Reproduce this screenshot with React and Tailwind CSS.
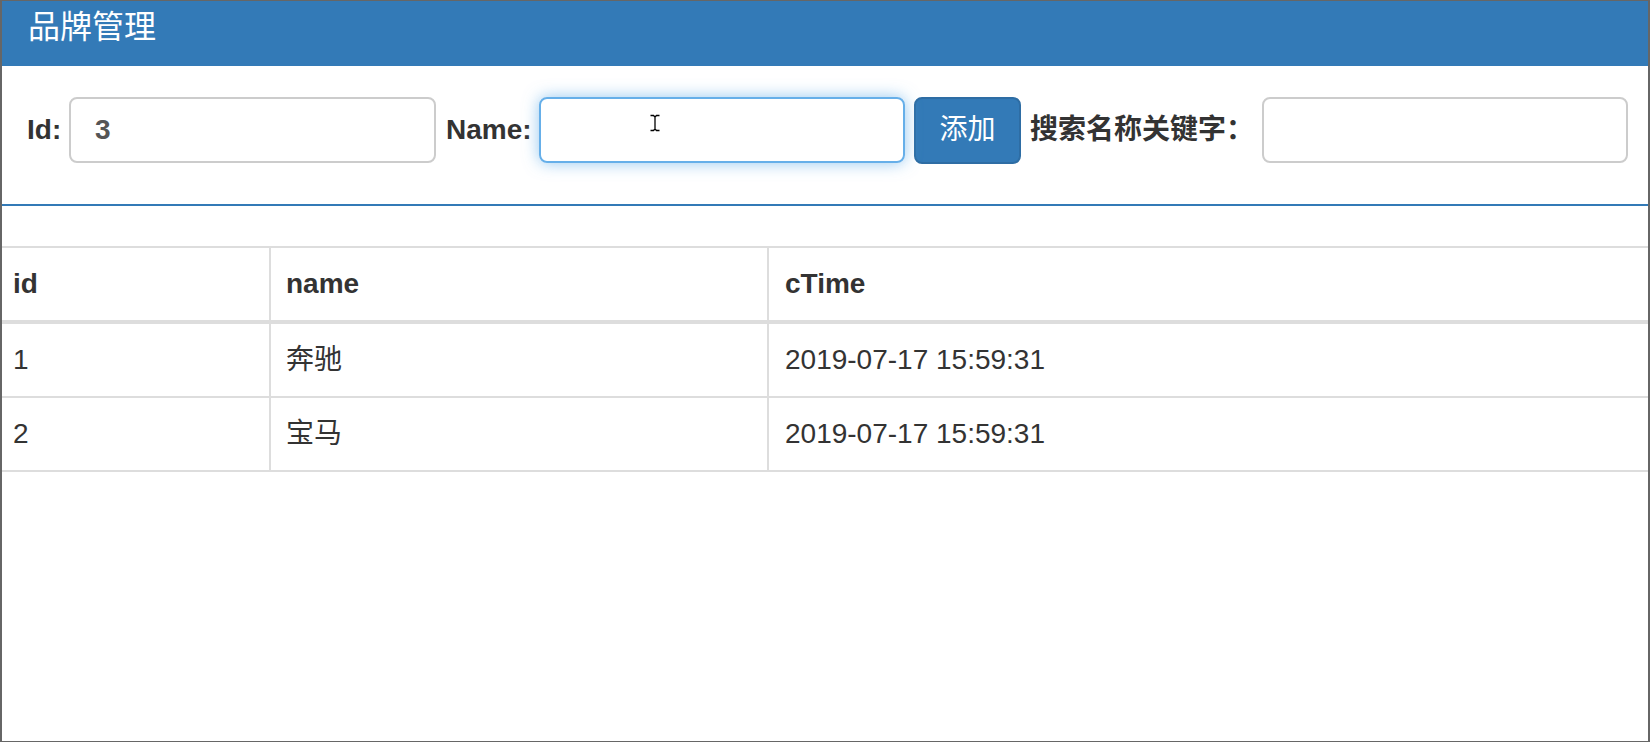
export default function App() {
  const rows = [
    { id: 1, name: '奔驰', ctime: '2019-07-17 15:59:31' },
    { id: 2, name: '宝马', ctime: '2019-07-17 15:59:31' },
  ];
  return (
    <div className="w-[1650px] h-[742px] box-border border-x-2 border-y border-[#666] bg-white overflow-hidden text-[#333] font-['Liberation_Sans','Noto_Sans_CJK_SC',sans-serif]">
      {/* panel */}
      <div className="border-b-2 border-[#337ab7]">
        <div className="h-[65px] box-border bg-[#337ab7] pl-[26px] pt-[9px] text-[32px] leading-[35px] text-white">
          品牌管理
        </div>
        <div className="h-[138px] box-border pt-[31px]">
          <div className="flex items-center h-[66px]">
            <label className="w-[67px] pl-[25px] box-border text-[28px] font-bold leading-[40px]">Id:</label>
            <div className="w-[367px] h-[66px] box-border border-2 border-[#ccc] rounded-[8px] pl-[24px] flex items-center text-[28px] font-bold text-[#555]">
              3
            </div>
            <label className="w-[103px] pl-[10px] box-border text-[28px] font-bold leading-[40px]">Name:</label>
            <div className="relative w-[366px] h-[66px] box-border border-2 border-[#66afe9] rounded-[8px] shadow-[0_0_16px_rgba(102,175,233,0.7)]">
              <svg className="absolute left-[108px] top-[15px]" width="12" height="18" viewBox="0 0 12 18">
                <path d="M1.5 1.5 H4.5 L6 3 L7.5 1.5 H10.5 M6 3 V15 M1.5 16.5 H4.5 L6 15 L7.5 16.5 H10.5" fill="none" stroke="#fff" strokeWidth="3" />
                <path d="M1.5 1.5 H4.5 L6 3 L7.5 1.5 H10.5 M6 3 V15 M1.5 16.5 H4.5 L6 15 L7.5 16.5 H10.5" fill="none" stroke="#000" strokeWidth="1.3" />
              </svg>
            </div>
            <button className="ml-[9px] w-[107px] h-[67px] box-border border-2 border-[#2e6da4] bg-[#337ab7] rounded-[8px] text-white text-[28px] leading-[40px] font-normal">
              添加
            </button>
            <label className="w-[241px] pl-[9px] box-border text-[28px] font-bold leading-[40px] whitespace-nowrap">搜索名称关键字：</label>
            <div className="w-[366px] h-[66px] box-border border-2 border-[#ccc] rounded-[8px]"></div>
          </div>
        </div>
      </div>

      {/* table */}
      <div className="mt-[40px] border-t-2 border-[#ddd] text-[28px] leading-[40px]">
        <div className="grid grid-cols-[267px_498px_1fr] border-b-4 border-[#ddd] font-bold">
          <div className="py-[16px] pl-[11px]">id</div>
          <div className="py-[16px] pl-[15px] border-l-2 border-[#ddd]">name</div>
          <div className="py-[16px] pl-[16px] border-l-2 border-[#ddd]">cTime</div>
        </div>
        {rows.map((r) => (
          <div key={r.id} className="grid grid-cols-[267px_498px_1fr] border-b-2 border-[#ddd]">
            <div className="py-[16px] pl-[11px]">{r.id}</div>
            <div className="py-[16px] pl-[15px] border-l-2 border-[#ddd]">{r.name}</div>
            <div className="py-[16px] pl-[16px] border-l-2 border-[#ddd]">{r.ctime}</div>
          </div>
        ))}
      </div>
    </div>
  );
}
